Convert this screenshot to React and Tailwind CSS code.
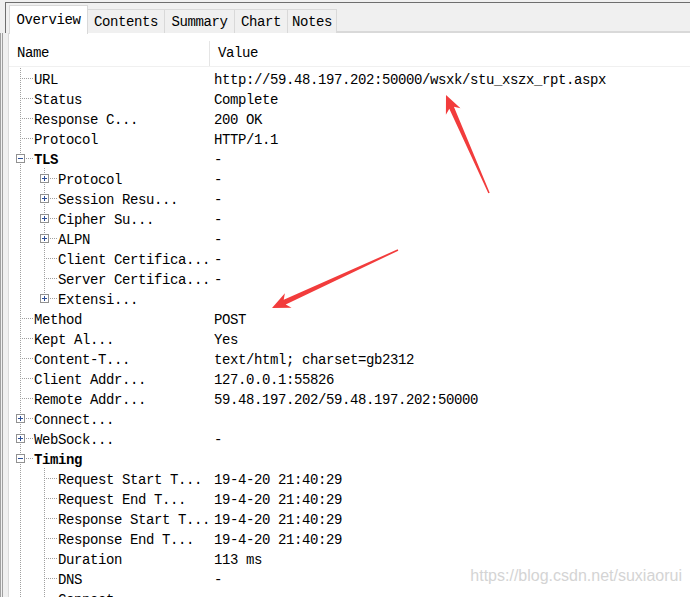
import React from "react";

const MONO = { fontFamily: '"Liberation Mono", "Courier New", monospace' };

// tree rows shown in the Overview panel (d = depth, exp = expander type)
const rows = [
  { d: 1, name: "", value: "" },
  { d: 1, name: "URL", value: "http://59.48.197.202:50000/wsxk/stu_xszx_rpt.aspx" },
  { d: 1, name: "Status", value: "Complete" },
  { d: 1, name: "Response C...", value: "200 OK" },
  { d: 1, name: "Protocol", value: "HTTP/1.1" },
  { d: 1, name: "TLS", value: "-", exp: "minus", bold: true },
  { d: 2, name: "Protocol", value: "-", exp: "plus" },
  { d: 2, name: "Session Resu...", value: "-", exp: "plus" },
  { d: 2, name: "Cipher Su...", value: "-", exp: "plus" },
  { d: 2, name: "ALPN", value: "-", exp: "plus" },
  { d: 2, name: "Client Certifica...", value: "-" },
  { d: 2, name: "Server Certifica...", value: "-" },
  { d: 2, name: "Extensi...", value: "", exp: "plus", last: true },
  { d: 1, name: "Method", value: "POST" },
  { d: 1, name: "Kept Al...", value: "Yes" },
  { d: 1, name: "Content-T...", value: "text/html; charset=gb2312" },
  { d: 1, name: "Client Addr...", value: "127.0.0.1:55826" },
  { d: 1, name: "Remote Addr...", value: "59.48.197.202/59.48.197.202:50000" },
  { d: 1, name: "Connect...", value: "", exp: "plus" },
  { d: 1, name: "WebSock...", value: "-", exp: "plus" },
  { d: 1, name: "Timing", value: "", exp: "minus", bold: true },
  { d: 2, name: "Request Start T...", value: "19-4-20 21:40:29" },
  { d: 2, name: "Request End T...", value: "19-4-20 21:40:29" },
  { d: 2, name: "Response Start T...", value: "19-4-20 21:40:29" },
  { d: 2, name: "Response End T...", value: "19-4-20 21:40:29" },
  { d: 2, name: "Duration", value: "113 ms" },
  { d: 2, name: "DNS", value: "-" },
  { d: 2, name: "Connect", value: "" },
];

const tabs = [
  { label: "Overview", w: "w-[79px]", active: true },
  { label: "Contents", w: "w-[77px]" },
  { label: "Summary", w: "w-[70px]" },
  { label: "Chart", w: "w-[53px]" },
  { label: "Notes", w: "w-[49px]" },
];

const DOT = "#a0a0a0";

function GuideCell({ mode, exp, last }) {
  // mode: "pass" = ancestor line only, "own" = connector for this row
  return (
    <svg width="24" height="20" className="shrink-0" shapeRendering="crispEdges">
      {mode === "pass" && (
        <line x1="11.5" y1="0" x2="11.5" y2="20" stroke={DOT} strokeDasharray="1 1" />
      )}
      {mode === "own" && (
        <>
          <line x1="11.5" y1="0" x2="11.5" y2={last ? 10 : 20} stroke={DOT} strokeDasharray="1 1" />
          <line x1="13" y1="10.5" x2="24" y2="10.5" stroke={DOT} strokeDasharray="1 1" />
          {exp && (
            <>
              <rect x="7.5" y="6.5" width="8" height="8" fill="#ffffff" stroke="#919191" />
              <rect x="9" y="10" width="5" height="1" fill="#2d4e96" />
              {exp === "plus" && <rect x="11" y="8" width="1" height="5" fill="#2d4e96" />}
            </>
          )}
        </>
      )}
    </svg>
  );
}

function TreeRow({ row }) {
  return (
    <div className="flex h-5 whitespace-nowrap text-black">
      <div className="flex w-[201px] shrink-0 overflow-hidden">
        {row.d === 2 && <GuideCell mode="pass" />}
        <GuideCell mode="own" exp={row.exp} last={row.last} />
        <span className={"pl-px pt-[4px] leading-4 " + (row.bold ? "font-bold" : "")}>{row.name}</span>
      </div>
      <div className="pl-[4px] pt-[4px] leading-4">{row.value}</div>
    </div>
  );
}

function Arrows() {
  return (
    <svg className="pointer-events-none absolute left-0 top-0" width="690" height="597">
      <polygon
        fill="#f23c3c"
        points="446,95 460.5,108.3 453.9,106.8 489.7,192.7 488.3,193.3 449.3,108.8 445.9,114.7"
      />
      <polygon
        fill="#f23c3c"
        points="272,308 284.9,293.2 283.7,299.8 397.7,249.3 398.3,250.7 285.7,304.4 291.6,307.8"
      />
    </svg>
  );
}

export default function App() {
  return (
    <div
      className="relative flex h-[597px] w-[690px] flex-col overflow-hidden bg-[#f0f0f0] text-[14px] tracking-[-0.4px]"
      style={MONO}
    >
      {/* tab strip */}
      <div className="flex h-[33px] shrink-0 pt-[2px]">
        <div className="w-[5px]" />
        <div className="flex flex-1 items-end border-l border-t border-[#6e6e6e] pl-[3px]">
          {tabs.map((t) =>
            t.active ? (
              <div
                key={t.label}
                className={t.w + " relative z-10 -mb-px flex h-[29px] items-center justify-center border border-b-0 border-[#d9d9d9] bg-white"}
              >
                {t.label}
              </div>
            ) : (
              <div
                key={t.label}
                className={t.w + " flex h-[24px] items-center justify-center border border-b-0 border-l-0 border-[#d9d9d9] bg-[#f0f0f0] pt-[2px]"}
              >
                {t.label}
              </div>
            )
          )}
          <div className="flex-1 border-b-2 border-[#d9d9d9]" />
        </div>
      </div>

      {/* body */}
      <div className="flex min-h-0 flex-1">
        <div className="flex w-[8px] shrink-0">
          <div className="w-px bg-[#a0a0a0]" />
          <div className="w-px bg-[#f0f0f0]" />
          <div className="w-px bg-[#a0a0a0]" />
        </div>
        <div className="flex min-w-0 flex-1 flex-col border-l border-[#d9d9d9] bg-white">
          <div className="flex h-[34px] shrink-0 border-b border-[#f0f0f0] pt-[8px]">
            <div className="flex w-[201px] items-center border-r border-[#e5e5e5] pl-[8px]">Name</div>
            <div className="flex items-center pl-[8px]">Value</div>
          </div>
          <div className="min-h-0 flex-1 overflow-hidden">
            <div className="-mt-[19px]">
              {rows.map((r, i) => (
                <TreeRow key={i} row={r} />
              ))}
            </div>
          </div>
        </div>
      </div>

      <Arrows />

      <div
        className="pointer-events-none absolute bottom-[9px] right-[8px] text-[16px] tracking-normal text-[#d4d4d4]"
        style={{ fontFamily: '"Liberation Sans", Arial, sans-serif' }}
      >
        https://blog.csdn.net/suxiaorui
      </div>
    </div>
  );
}
